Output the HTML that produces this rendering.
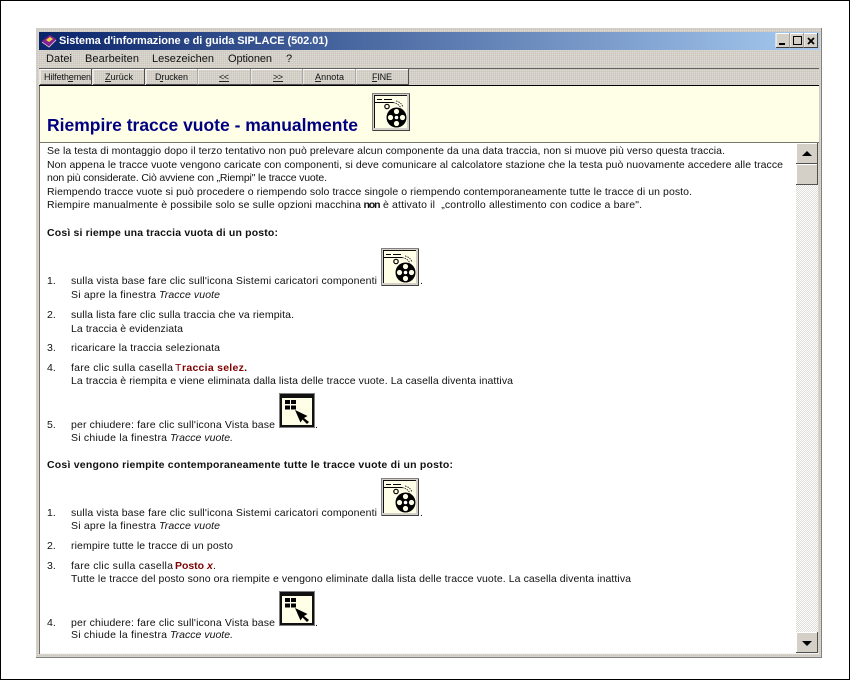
<!DOCTYPE html>
<html lang="it">
<head>
<meta charset="utf-8">
<title>Sistema d'informazione e di guida SIPLACE</title>
<style>
html,body{margin:0;padding:0;background:#fff;width:850px;height:680px;overflow:hidden}
svg{display:block}
text{font-family:"Liberation Sans",sans-serif;font-size:10.5px;fill:#111;white-space:pre}
.b{font-weight:bold;font-size:10.5px}
.i{font-style:italic}
.r{fill:#800000}
.m{fill:#111;font-size:11px}
.t{font-size:9px}
</style>
</head>
<body>
<svg width="850" height="680" viewBox="0 0 850 680" xmlns="http://www.w3.org/2000/svg">
<defs>
<linearGradient id="tg" x1="0" x2="1" y1="0" y2="0">
<stop offset="0" stop-color="#0a246a"/><stop offset="1" stop-color="#a6caf0"/>
</linearGradient>
<pattern id="d" width="2" height="2" patternUnits="userSpaceOnUse">
<rect width="2" height="2" fill="#d4d0c8"/><rect width="1" height="1" fill="#dcd9d2"/><rect x="1" y="1" width="1" height="1" fill="#cbc7bf"/>
</pattern>
<pattern id="c" width="2" height="2" patternUnits="userSpaceOnUse">
<rect width="2" height="2" fill="#dedcd6"/><rect width="1" height="1" fill="#fff"/><rect x="1" y="1" width="1" height="1" fill="#fff"/>
</pattern>
<g id="reel">
<rect x="0" y="0" width="38" height="38" fill="#808080"/>
<rect x="1" y="1" width="37" height="37" fill="#404040"/>
<rect x="1" y="1" width="36" height="36" fill="#d4d0c8"/>
<rect x="2" y="2" width="33" height="33" fill="#111"/>
<rect x="3" y="3" width="32" height="32" fill="#ffffe8"/>
<path d="M5 6.500h5M12 6.500h8M3 9.500h18" stroke="#000" stroke-width="1" fill="none"/>
<circle cx="15" cy="13.500" r="2.200" fill="none" stroke="#000" stroke-width="1.200"/>
<path d="M21 9.500q6 1 8 6M24 8q5 1 7 6" stroke="#333" stroke-width="1" stroke-dasharray="1.500 1" fill="none"/>
<circle cx="24.500" cy="24.500" r="10" fill="#000"/>
<circle cx="24.500" cy="24.500" r="1.800" fill="#fff"/>
<circle cx="24.500" cy="18.500" r="2.600" fill="#ffffe8"/>
<circle cx="24.500" cy="30.500" r="2.600" fill="#ffffe8"/>
<circle cx="18.500" cy="24.500" r="2.600" fill="#ffffe8"/>
<circle cx="30.500" cy="24.500" r="2.600" fill="#ffffe8"/>
</g>
<g id="cur">
<rect x="0" y="0" width="36" height="35" fill="#808080"/>
<rect x="1" y="1" width="34" height="33" fill="#111"/>
<rect x="3" y="3" width="30" height="29" fill="#ffffe8"/>
<rect x="3" y="3" width="30" height="2" fill="#111"/>
<rect x="6" y="7" width="5" height="4" fill="#000"/><rect x="12" y="7" width="5" height="4" fill="#000"/>
<rect x="6" y="12.500" width="5" height="4" fill="#000"/><rect x="12" y="12.500" width="5" height="4" fill="#000"/>
<path d="M16 17L28.500 23L25 25L30 29L28 31L23.500 26.500L21.500 29.500Z" fill="#000"/>
</g>
<g id="ub">
<rect width="14" height="15" fill="#d4d0c8"/>
<path d="M0 14.500V.5H13.500" stroke="#fff" fill="none"/>
<path d="M0 14.500H13.500V0" stroke="#404040" fill="none"/>
</g>
</defs>

<rect x=".5" y=".5" width="849" height="679" fill="#fff" stroke="#000"/>

<!-- window -->
<rect x="36" y="28" width="786" height="630" fill="url(#d)"/>
<path d="M36.500 658V28.500H822" stroke="#d4d0c8" fill="none"/>
<path d="M36 657.500H821.500V28" stroke="#808080" fill="none"/>

<!-- title bar -->
<rect x="39" y="32" width="780" height="18" fill="url(#tg)"/>
<path d="M42 41l8-6 6 4-7 7z" fill="#8a1f90"/>
<path d="M46 40l4-3 3 2-4 3z" fill="#e8d840"/>
<path d="M42 42l7 5 7-7" stroke="#e0b0e0" fill="none"/>
<text class="b" x="59" y="44" textLength="269" style="fill:#fff;font-size:11px">Sistema d'informazione e di guida SIPLACE (502.01)</text>
<use href="#ub" x="776" y="33"/><use href="#ub" x="790" y="33"/><use href="#ub" x="804" y="33"/>
<rect x="779" y="43" width="6" height="2" fill="#000"/>
<rect x="793.500" y="36.500" width="8" height="8" fill="none" stroke="#000"/>
<path d="M808 38l6 6M814 38l-6 6" stroke="#000" stroke-width="1.800"/>

<!-- menu -->
<text class="m" x="46" y="62" textLength="26">Datei</text>
<text class="m" x="85" y="62" textLength="54">Bearbeiten</text>
<text class="m" x="152" y="62" textLength="62">Lesezeichen</text>
<text class="m" x="228" y="62" textLength="44">Optionen</text>
<text class="m" x="286" y="62">?</text>

<!-- toolbar -->
<rect x="39" y="68" width="780" height="1" fill="#606060"/>
<rect x="39" y="85" width="780" height="1" fill="#000"/>
<g fill="none">
<path d="M40 84.500V69.500H91.500" stroke="#fff"/><path d="M40 84.500H91.500V69" stroke="#505050"/>
<path d="M93 84.500V69.500H144.500" stroke="#fff"/><path d="M93 84.500H144.500V69" stroke="#505050"/>
<path d="M146 84.500V69.500H197.500" stroke="#fff"/><path d="M146 84.500H197.500V69" stroke="#505050"/>
<path d="M198 84.500V69.500H250.500" stroke="#fff"/><path d="M198 84.500H250.500V69" stroke="#505050"/>
<path d="M251 84.500V69.500H302.500" stroke="#fff"/><path d="M251 84.500H302.500V69" stroke="#505050"/>
<path d="M303 84.500V69.500H355.500" stroke="#fff"/><path d="M303 84.500H355.500V69" stroke="#505050"/>
<path d="M356 84.500V69.500H408.500" stroke="#fff"/><path d="M356 84.500H408.500V69" stroke="#505050"/>
</g>
<text class="t" x="44" y="80" textLength="47">Hilfethemen</text>
<text class="t" x="105" y="80" textLength="28">Zurück</text>
<text class="t" x="155" y="80" textLength="33">Drucken</text>
<text class="t" x="219" y="80" textLength="10">&lt;&lt;</text>
<text class="t" x="273" y="80" textLength="10">&gt;&gt;</text>
<text class="t" x="315" y="80" textLength="29">Annota</text>
<text class="t" x="372" y="80" textLength="20">FINE</text>
<path d="M105 81.500h6M160 81.500h3M219 81.500h10M273 81.500h10M315 81.500h6M372 81.500h5M68 81.500h5" stroke="#222"/>

<!-- header -->
<rect x="40" y="86" width="779" height="56" fill="#ffffe8"/>
<rect x="39" y="86" width="1" height="568" fill="#6f6f68"/>
<rect x="40" y="142" width="779" height="1" fill="#77776a"/>
<text class="b" x="47" y="131" textLength="311" style="font-size:17.500px;fill:#000080">Riempire tracce vuote - manualmente</text>
<use href="#reel" x="372" y="93"/>

<!-- content -->
<rect x="40" y="143" width="756" height="511" fill="#fff"/>

<text x="47" y="154" textLength="678">Se la testa di montaggio dopo il terzo tentativo non può prelevare alcun componente da una data traccia, non si muove più verso questa traccia.</text>
<text x="47" y="168" textLength="736">Non appena le tracce vuote vengono caricate con componenti, si deve comunicare al calcolatore stazione che la testa può nuovamente accedere alle tracce</text>
<text x="47" y="181" textLength="280">non più considerate. Ciò avviene con „Riempi" le tracce vuote.</text>
<text x="47" y="195" textLength="645">Riempendo tracce vuote si può procedere o riempendo solo tracce singole o riempendo contemporaneamente tutte le tracce di un posto.</text>
<text x="47" y="208" textLength="314">Riempire manualmente è possibile solo se sulle opzioni macchina</text>
<text class="b" x="363.500" y="208" textLength="17">non</text>
<text x="383" y="208" textLength="259">è attivato il  „controllo allestimento con codice a bare".</text>

<text class="b" x="47" y="236" textLength="231">Così si riempe una traccia vuota di un posto:</text>

<text x="47" y="284">1.</text>
<text x="71" y="284" textLength="306">sulla vista base fare clic sull'icona Sistemi caricatori componenti</text>
<use href="#reel" x="381" y="248"/>
<text x="420" y="284">.</text>
<text x="71" y="298" textLength="85">Si apre la finestra</text>
<text class="i" x="159" y="298" textLength="61">Tracce vuote</text>

<text x="47" y="318">2.</text>
<text x="71" y="318" textLength="223">sulla lista fare clic sulla traccia che va riempita.</text>
<text x="71" y="332" textLength="112">La traccia è evidenziata</text>

<text x="47" y="351">3.</text>
<text x="71" y="351" textLength="149">ricaricare la traccia selezionata</text>

<text x="47" y="371">4.</text>
<text x="71" y="371" textLength="102">fare clic sulla casella</text>
<text class="r" x="175" y="371">T</text>
<text class="b r" x="182" y="371" textLength="65">raccia selez.</text>
<text x="71" y="384" textLength="442">La traccia è riempita e viene eliminata dalla lista delle tracce vuote. La casella diventa inattiva</text>

<text x="47" y="428">5.</text>
<text x="71" y="428" textLength="204">per chiudere: fare clic sull'icona Vista base</text>
<use href="#cur" x="279" y="393"/>
<text x="315" y="428">.</text>
<text x="71" y="441" textLength="96">Si chiude la finestra</text>
<text class="i" x="170" y="441" textLength="63">Tracce vuote.</text>

<text class="b" x="47" y="468" textLength="406">Così vengono riempite contemporaneamente tutte le tracce vuote di un posto:</text>

<text x="47" y="516">1.</text>
<text x="71" y="516" textLength="306">sulla vista base fare clic sull'icona Sistemi caricatori componenti</text>
<use href="#reel" x="381" y="478"/>
<text x="420" y="516">.</text>
<text x="71" y="529" textLength="85">Si apre la finestra</text>
<text class="i" x="159" y="529" textLength="61">Tracce vuote</text>

<text x="47" y="549">2.</text>
<text x="71" y="549" textLength="162">riempire tutte le tracce di un posto</text>

<text x="47" y="569">3.</text>
<text x="71" y="569" textLength="102">fare clic sulla casella</text>
<text class="b r" x="175" y="569" textLength="29">Posto</text>
<text class="b i r" x="207" y="569">x</text>
<text x="213" y="569">.</text>
<text x="71" y="582" textLength="560">Tutte le tracce del posto sono ora riempite e vengono eliminate dalla lista delle tracce vuote. La casella diventa inattiva</text>

<text x="47" y="626">4.</text>
<text x="71" y="626" textLength="204">per chiudere: fare clic sull'icona Vista base</text>
<use href="#cur" x="279" y="591"/>
<text x="315" y="626">.</text>
<text x="71" y="638" textLength="96">Si chiude la finestra</text>
<text class="i" x="170" y="638" textLength="63">Tracce vuote.</text>

<!-- scrollbar -->
<rect x="796" y="143" width="22" height="511" fill="url(#c)"/>
<rect x="796" y="143" width="22" height="21" fill="#d4d0c8"/>
<path d="M796.500 164V143.500H818" stroke="#fff" fill="none"/>
<path d="M796 163.500H817.500V143" stroke="#505050" fill="none"/>
<path d="M807 151l-5 5h10z" fill="#000"/>
<rect x="796" y="164" width="22" height="21" fill="#d4d0c8"/>
<path d="M796.500 185V164.500H818" stroke="#fff" fill="none"/>
<path d="M796 184.500H817.500V164" stroke="#505050" fill="none"/>
<rect x="796" y="632" width="22" height="21" fill="#d4d0c8"/>
<path d="M796.500 653V632.500H818" stroke="#fff" fill="none"/>
<path d="M796 652.500H817.500V632" stroke="#505050" fill="none"/>
<path d="M807 646l-5-5h10z" fill="#000"/>
<rect x="40" y="653" width="779" height="1" fill="#f4f4f0"/>
</svg>
</body>
</html>
